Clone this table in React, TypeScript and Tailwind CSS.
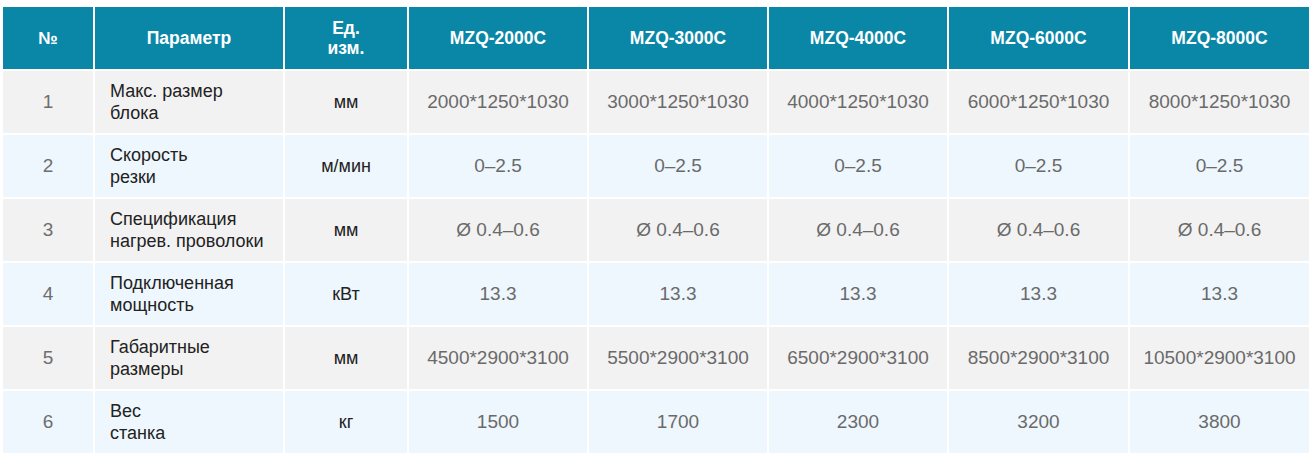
const models = ["MZQ-2000C", "MZQ-3000C", "MZQ-4000C", "MZQ-6000C", "MZQ-8000C"];

const rows = [
  { n: "1", label: ["Макс. размер", "блока"], unit: "мм", vals: ["2000*1250*1030", "3000*1250*1030", "4000*1250*1030", "6000*1250*1030", "8000*1250*1030"] },
  { n: "2", label: ["Скорость", "резки"], unit: "м/мин", vals: ["0–2.5", "0–2.5", "0–2.5", "0–2.5", "0–2.5"] },
  { n: "3", label: ["Спецификация", "нагрев. проволоки"], unit: "мм", vals: ["Ø 0.4–0.6", "Ø 0.4–0.6", "Ø 0.4–0.6", "Ø 0.4–0.6", "Ø 0.4–0.6"] },
  { n: "4", label: ["Подключенная", "мощность"], unit: "кВт", vals: ["13.3", "13.3", "13.3", "13.3", "13.3"] },
  { n: "5", label: ["Габаритные", "размеры"], unit: "мм", vals: ["4500*2900*3100", "5500*2900*3100", "6500*2900*3100", "8500*2900*3100", "10500*2900*3100"] },
  { n: "6", label: ["Вес", "станка"], unit: "кг", vals: ["1500", "1700", "2300", "3200", "3800"] },
];

export default function App() {
  return (
    <div className="w-[1312px] h-[458px] bg-white pt-[5px] pl-[1px] font-['Liberation_Sans',Arial,sans-serif]">
      <table className="table-fixed border-collapse w-[1308px]">
        <colgroup>
          <col className="w-[92px]" />
          <col className="w-[190px]" />
          <col className="w-[124px]" />
          <col className="w-[180px]" />
          <col className="w-[180px]" />
          <col className="w-[180px]" />
          <col className="w-[181px]" />
          <col className="w-[181px]" />
        </colgroup>
        <thead>
          <tr className="h-[64px] bg-[#0a87a7] text-white font-bold text-[17.5px] leading-[20px]">
            <th className="border-2 border-white">№</th>
            <th className="border-2 border-white">Параметр</th>
            <th className="border-2 border-white">
              Ед.
              <br />
              изм.
            </th>
            {models.map((m) => (
              <th key={m} className="border-2 border-white">
                {m}
              </th>
            ))}
          </tr>
        </thead>
        <tbody>
          {rows.map((r, i) => (
            <tr key={r.n} className={`h-[64px] ${i % 2 === 0 ? "bg-[#f2f2f2]" : "bg-[#eef7fd]"}`}>
              <td className="border-2 border-white text-center text-[19px] text-[#6e6e6e]">{r.n}</td>
              <td className="border-2 border-white pl-[15px] text-[18px] leading-[22px] text-[#222]">
                {r.label[0]}
                <br />
                {r.label[1]}
              </td>
              <td className="border-2 border-white text-center text-[18px] text-[#222]">{r.unit}</td>
              {r.vals.map((v, j) => (
                <td key={j} className="border-2 border-white text-center text-[19px] text-[#6a6a6a] whitespace-nowrap">
                  {v}
                </td>
              ))}
            </tr>
          ))}
        </tbody>
      </table>
    </div>
  );
}
